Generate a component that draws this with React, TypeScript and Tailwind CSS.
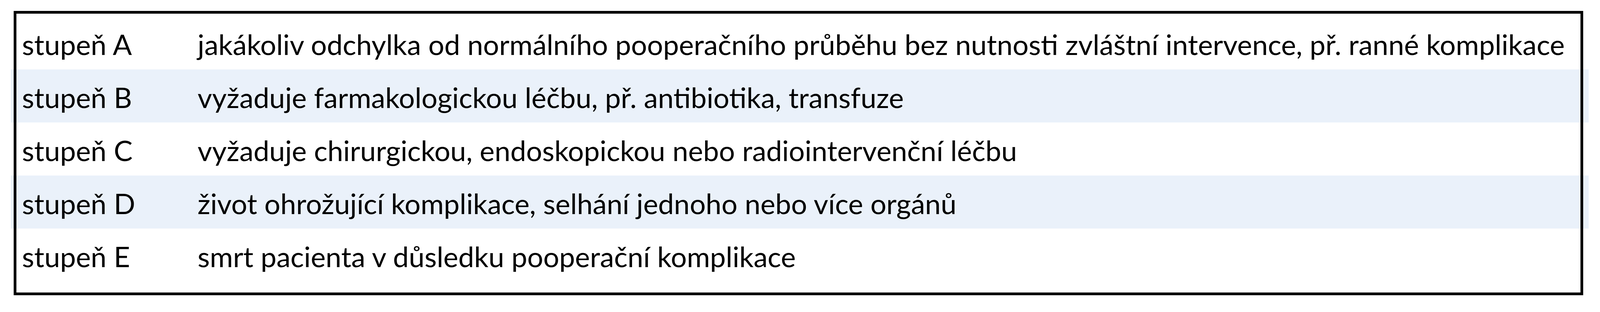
const rows = [
    { grade: "stupeň A", text: "jakákoliv odchylka od normálního pooperačního průběhu bez nutnosti zvláštní intervence, př. ranné komplikace" },
    { grade: "stupeň B", text: "vyžaduje farmakologickou léčbu, př. antibiotika, transfuze" },
    { grade: "stupeň C", text: "vyžaduje chirurgickou, endoskopickou nebo radiointervenční léčbu" },
    { grade: "stupeň D", text: "život ohrožující komplikace, selhání jednoho nebo více orgánů" },
    { grade: "stupeň E", text: "smrt pacienta v důsledku pooperační komplikace" },
]

export default function App() {
    return (
        <div className="min-h-screen bg-white pt-[28px] pl-[28px] pr-[29px] font-['Lato',sans-serif] text-black">
            <div className="relative w-full pt-[14px] pb-[35px]">
                {rows.map((r, i) => (
                    <div
                        key={r.grade}
                        className={`flex h-[136px] pl-[0.69vw] pt-[6px] text-[1.764vw] leading-[130px] whitespace-nowrap ${i % 2 === 1 ? "bg-[#eaf1fa]" : "bg-white"}`}
                    >
                        <div className="w-[10.976vw] shrink-0">{r.grade}</div>
                        <div>{r.text}</div>
                    </div>
                ))}
                {/* frame sits over the striped rows, which run a bit past it */}
                <div className="pointer-events-none absolute top-0 right-[14px] left-[7px] h-[729px] border-[7px] border-black" />
            </div>
        </div>
    )
}
